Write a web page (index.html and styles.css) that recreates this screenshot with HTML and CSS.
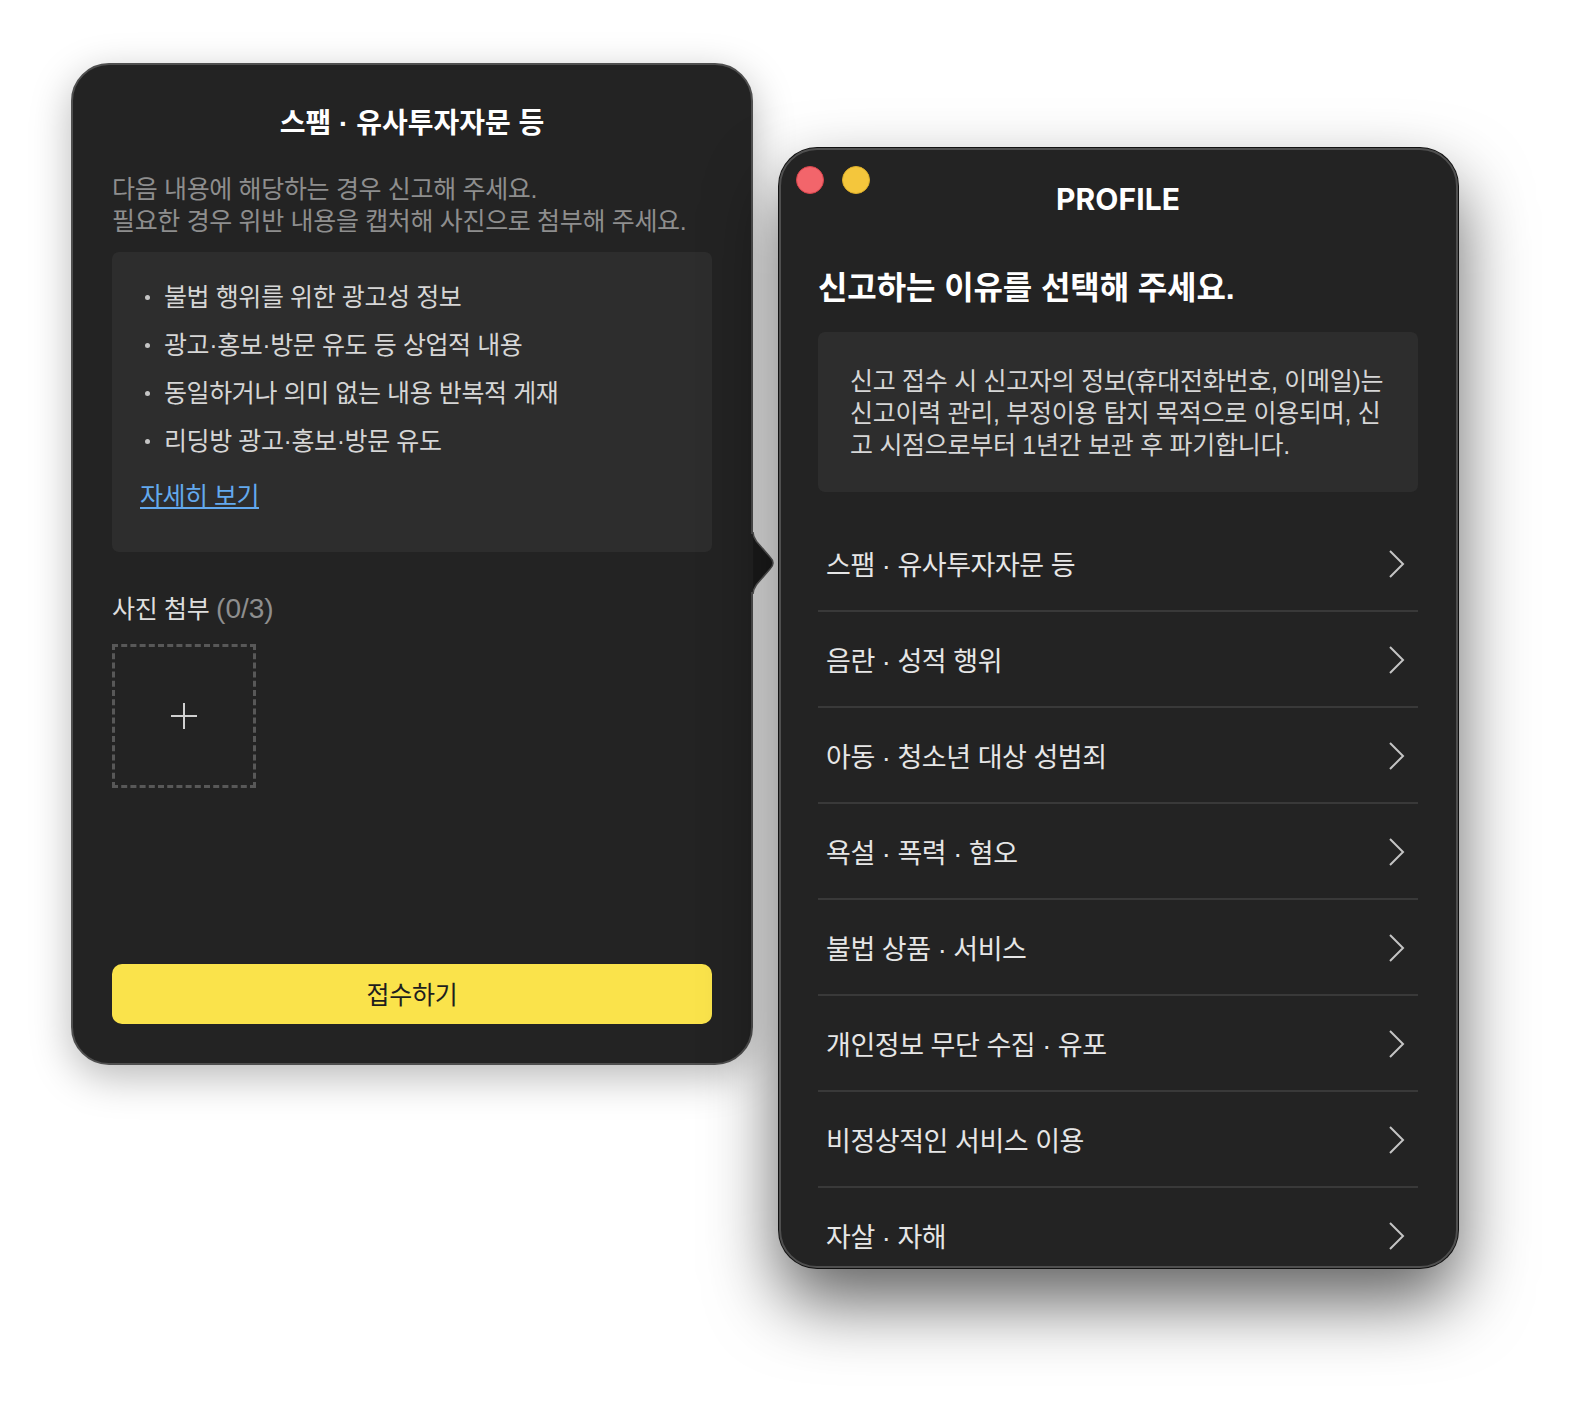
FILE: index.html
```html
<!DOCTYPE html>
<html lang="ko">
<head>
<meta charset="utf-8">
<title>신고하기</title>
<link rel="stylesheet" href="styles.css">
</head>
<body>
<section class="window window-left">
  <h2 class="left-title">스팸 · 유사투자자문 등</h2>
  <p class="lead">다음 내용에 해당하는 경우 신고해 주세요.<br>필요한 경우 위반 내용을 캡처해 사진으로 첨부해 주세요.</p>
  <div class="panel panel-rules">
    <ul class="rules">
      <li>불법 행위를 위한 광고성 정보</li>
      <li>광고·홍보·방문 유도 등 상업적 내용</li>
      <li>동일하거나 의미 없는 내용 반복적 게재</li>
      <li>리딩방 광고·홍보·방문 유도</li>
    </ul>
    <a class="more" href="#">자세히 보기</a>
  </div>
  <div class="attach-label">사진 첨부 <span class="count">(0/3)</span></div>
  <div class="attach-box">
    <svg class="plus" width="28" height="28" viewBox="0 0 28 28"><path d="M14 1v26M1 14h26" fill="none" stroke="#d0d0d0" stroke-width="2"/></svg>
  </div>
  <button class="submit">접수하기</button>
</section>
<svg class="notch" width="28" height="64" viewBox="0 0 28 64">
  <rect x="0" y="3" width="2" height="58" fill="#232323"/>
  <path d="M2 1C2 6 4 8 6 11L19 26C23 30 23 34 19 38L6 53C4 56 2 58 2 63" fill="#1b1b1b" stroke="#555" stroke-width="1.5"/>
</svg>
<section class="window window-right">
  <span class="dot dot-red"></span>
  <span class="dot dot-yellow"></span>
  <h1 class="app-title">PROFILE</h1>
  <h2 class="right-heading">신고하는 이유를 선택해 주세요.</h2>
  <div class="panel panel-notice">신고 접수 시 신고자의 정보(휴대전화번호, 이메일)는 신고이력 관리, 부정이용 탐지 목적으로 이용되며, 신고 시점으로부터 1년간 보관 후 파기합니다.</div>
  <ul class="reasons">
    <li>스팸 · 유사투자자문 등<svg class="chev" width="18" height="30" viewBox="0 0 18 30"><path d="M2 2l13 13L2 28" fill="none" stroke="#c4c4c4" stroke-width="2"/></svg></li>
    <li>음란 · 성적 행위<svg class="chev" width="18" height="30" viewBox="0 0 18 30"><path d="M2 2l13 13L2 28" fill="none" stroke="#c4c4c4" stroke-width="2"/></svg></li>
    <li>아동 · 청소년 대상 성범죄<svg class="chev" width="18" height="30" viewBox="0 0 18 30"><path d="M2 2l13 13L2 28" fill="none" stroke="#c4c4c4" stroke-width="2"/></svg></li>
    <li>욕설 · 폭력 · 혐오<svg class="chev" width="18" height="30" viewBox="0 0 18 30"><path d="M2 2l13 13L2 28" fill="none" stroke="#c4c4c4" stroke-width="2"/></svg></li>
    <li>불법 상품 · 서비스<svg class="chev" width="18" height="30" viewBox="0 0 18 30"><path d="M2 2l13 13L2 28" fill="none" stroke="#c4c4c4" stroke-width="2"/></svg></li>
    <li>개인정보 무단 수집 · 유포<svg class="chev" width="18" height="30" viewBox="0 0 18 30"><path d="M2 2l13 13L2 28" fill="none" stroke="#c4c4c4" stroke-width="2"/></svg></li>
    <li>비정상적인 서비스 이용<svg class="chev" width="18" height="30" viewBox="0 0 18 30"><path d="M2 2l13 13L2 28" fill="none" stroke="#c4c4c4" stroke-width="2"/></svg></li>
    <li>자살 · 자해<svg class="chev" width="18" height="30" viewBox="0 0 18 30"><path d="M2 2l13 13L2 28" fill="none" stroke="#c4c4c4" stroke-width="2"/></svg></li>
  </ul>
</section>
</body>
</html>
```
FILE: styles.css
```css
* { box-sizing: border-box; }
html, body { margin: 0; padding: 0; }
body {
  width: 1570px;
  height: 1416px;
  position: relative;
  overflow: hidden;
  background: #fff;
  font-family: "Liberation Sans", "Noto Sans CJK KR", sans-serif;
  color: #e6e6e6;
}
.window {
  position: absolute;
  background: #232323;
  border-radius: 38px;
  border: 2px solid #4f4f4f;
  overflow: hidden;
}
.window-left {
  left: 71px;
  top: 63px;
  width: 682px;
  height: 1002px;
  padding: 39px 39px 39px;
  display: flex;
  flex-direction: column;
  box-shadow: 0 12px 40px rgba(0, 0, 0, .28);
}
.window-right {
  left: 779px;
  top: 148px;
  width: 679px;
  height: 1120px;
  padding: 0 38px 0 37px;
  box-shadow: 0 0 0 1px #111, 0 34px 70px rgba(0, 0, 0, .62);
}
.notch { position: absolute; left: 751px; top: 531px; }
.left-title {
  margin: 0;
  font-size: 28px;
  line-height: 40px;
  font-weight: 700;
  color: #fff;
  text-align: center;
  letter-spacing: 0;
}
.lead {
  margin: 29px 0 0;
  font-size: 25px;
  line-height: 32px;
  color: #8e8e8e;
  letter-spacing: -.33px;
}
.panel { background: #2d2d2d; border-radius: 7px; }
.panel-rules { height: 300px; margin-top: 15px; padding: 21px 28px 0; }
.rules { list-style: none; margin: 0; padding: 0; }
.rules li {
  position: relative;
  height: 48px;
  line-height: 48px;
  padding-left: 24px;
  font-size: 25px;
  color: #d6d6d6;
  letter-spacing: -.4px;
}
.rules li::before {
  content: "";
  position: absolute;
  left: 5px;
  top: 22px;
  width: 5px;
  height: 5px;
  border-radius: 50%;
  background: #c4c4c4;
}
.more {
  display: inline-block;
  margin-top: 7px;
  font-size: 25px;
  line-height: 48px;
  color: #63a9ee;
  letter-spacing: -.5px;
}
.attach-label {
  margin-top: 39px;
  font-size: 25px;
  line-height: 36px;
  color: #dedede;
  letter-spacing: -.3px;
}
.count { color: #8e8e8e; font-size: 28px; letter-spacing: 0; }
.attach-box {
  width: 144px;
  height: 144px;
  margin-top: 17px;
  border: 3px dashed #585858;
  display: flex;
  align-items: center;
  justify-content: center;
}
.submit {
  margin-top: auto;
  height: 60px;
  padding: 0 0 2px;
  border: 0;
  border-radius: 10px;
  background: #fae34b;
  font: inherit;
  font-size: 25px;
  color: #1e1e1e;
  letter-spacing: -.2px;
}
.dot {
  position: absolute;
  top: 16px;
  width: 28px;
  height: 28px;
  border-radius: 50%;
}
.dot-red { left: 15px; background: #f2656b; border: 1px solid #d9444c; }
.dot-yellow { left: 61px; background: #f4c63c; border: 1px solid #dcae2a; }
.app-title {
  margin: 0;
  padding-top: 29px;
  font-family: Inter, "Liberation Sans", sans-serif;
  font-size: 30px;
  line-height: 40px;
  font-weight: 700;
  color: #fff;
  text-align: center;
  letter-spacing: .1px;
}
.right-heading {
  margin: 47px 0 0;
  font-size: 32px;
  line-height: 44px;
  font-weight: 700;
  color: #fff;
  letter-spacing: -.1px;
}
.panel-notice {
  height: 160px;
  margin-top: 22px;
  padding: 33px 24px 0 32px;
  font-size: 25px;
  line-height: 32px;
  color: #d6d6d6;
  letter-spacing: -.28px;
  word-break: break-all;
}
.reasons { list-style: none; margin: 24px 0 0; padding: 0; }
.reasons li {
  height: 96px;
  padding: 0 12px 0 8px;
  display: flex;
  align-items: center;
  justify-content: space-between;
  border-bottom: 2px solid #393939;
  font-size: 27px;
  color: #e6e6e6;
  letter-spacing: -.45px;
}
.reasons li:last-child { border-bottom-color: transparent; }
.chev { margin-top: 2px; }
```
